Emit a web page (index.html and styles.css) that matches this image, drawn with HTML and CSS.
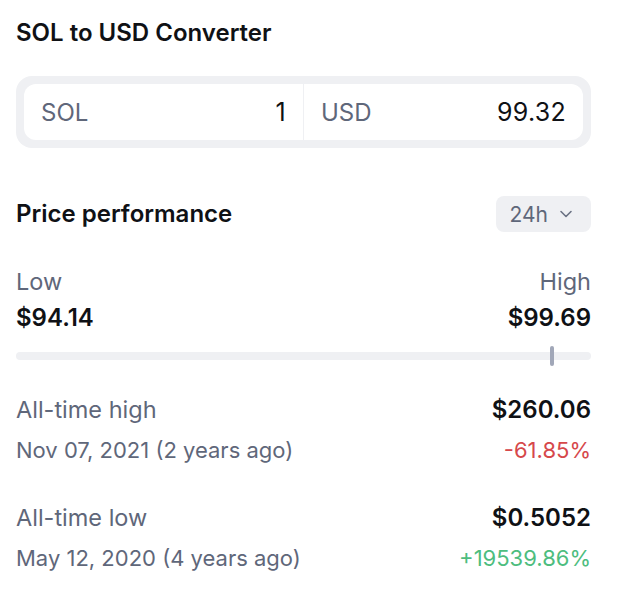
FILE: index.html
```html
<!DOCTYPE html>
<html>
<head>
<meta charset="utf-8">
<link rel="stylesheet" href="styles.css">
</head>
<body>
<main class="panel">
  <h2 class="title">SOL to USD Converter</h2>
  <div class="converter">
    <div class="conv-inner">
      <div class="cell"><span class="cur">SOL</span><span class="amt">1</span></div>
      <div class="divider"></div>
      <div class="cell"><span class="cur">USD</span><span class="amt">99.32</span></div>
    </div>
  </div>

  <div class="perf-head">
    <h2 class="title">Price performance</h2>
    <button class="range">24h
      <svg class="chev" width="14" height="8" viewBox="0 0 14 8"><path d="M2 1.5 L7 6.5 L12 1.5" fill="none" stroke="#6b7284" stroke-width="1.6" stroke-linecap="round" stroke-linejoin="round"/></svg>
    </button>
  </div>

  <div class="lowhigh">
    <div class="lh"><div class="label">Low</div><div class="value">$94.14</div></div>
    <div class="lh right"><div class="label">High</div><div class="value">$99.69</div></div>
  </div>
  <div class="bar"><div class="marker" style="left: 92.9%"></div></div>

  <div class="stat first">
    <div class="row"><span class="label">All-time high</span><span class="value">$260.06</span></div>
    <div class="row sub"><span class="label">Nov 07, 2021 (2 years ago)</span><span class="neg">-61.85%</span></div>
  </div>
  <div class="stat second">
    <div class="row"><span class="label">All-time low</span><span class="value">$0.5052</span></div>
    <div class="row sub"><span class="label">May 12, 2020 (4 years ago)</span><span class="pos">+19539.86%</span></div>
  </div>
</main>
</body>
</html>
```
FILE: styles.css
```css
* { box-sizing: border-box; }
html, body { margin: 0; padding: 0; background: #ffffff; }
body { font-family: Inter, "Noto Sans", sans-serif; color: #0f1115; }
.panel { width: 575px; margin-left: 16px; padding-top: 19px; }
.title { margin: 0; font-size: 24px; line-height: 28px; font-weight: 600; color: #0f1115; }

.converter { margin-top: 29px; background: #eff0f3; border-radius: 16px; padding: 8px; }
.conv-inner { display: flex; background: #ffffff; border-radius: 12px; height: 56px; }
.cell { flex: 1; display: flex; align-items: center; justify-content: space-between; padding: 0 17px; font-size: 24px; }
.cur { color: #5f677a; }
.amt { color: #0f1115; font-size: 25px; letter-spacing: 0.3px; }
.divider { width: 1px; background: #eff0f3; }

.perf-head { margin-top: 48px; display: flex; align-items: center; justify-content: space-between; height: 36px; }
.range { font-family: inherit; font-size: 21px; color: #5f677a; background: #eff0f3; border: none; border-radius: 8px; height: 36px; padding: 0 18px 0 14px; display: flex; align-items: center; gap: 11px; }
.chev { display: block; }

.lowhigh { margin-top: 36px; display: flex; justify-content: space-between; }
.lh.right { text-align: right; }
.label { font-size: 23.5px; line-height: 28px; color: #5f677a; }
.value { font-size: 24px; line-height: 28px; font-weight: 600; color: #0f1115; }
.lh .value { margin-top: 8px; }

.bar { position: relative; margin-top: 20px; height: 8px; border-radius: 4px; background: #eff0f3; }
.marker { position: absolute; top: -6px; width: 4px; height: 20px; border-radius: 2px; background: #a1a7b8; }

.stat .row { display: flex; justify-content: space-between; align-items: center; height: 28px; }
.stat .row.sub { margin-top: 12px; }
.stat.first { margin-top: 36px; }
.stat.second { margin-top: 40px; }
.stat .row.sub .label { font-size: 22px; }
.neg { font-size: 22px; color: #d6484b; }
.pos { font-size: 22px; color: #4dbd7e; }
```
